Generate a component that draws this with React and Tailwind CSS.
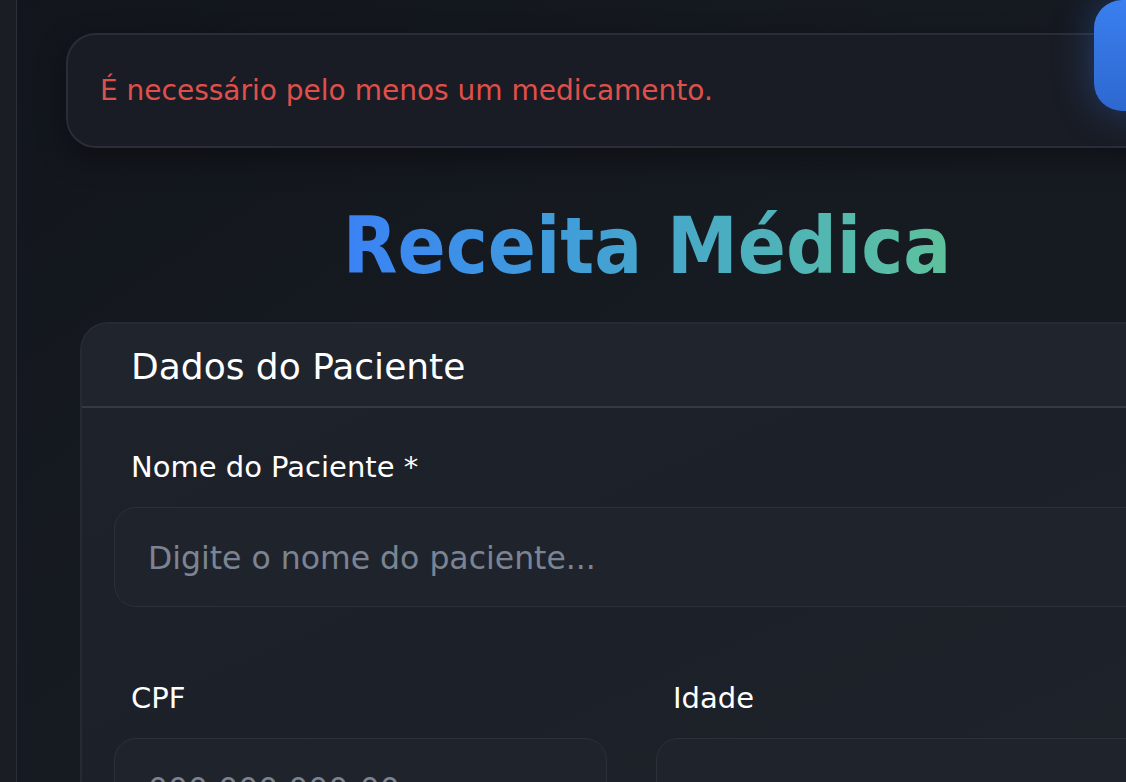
import React from 'react';

const font = { fontFamily: '"DejaVu Sans", "Liberation Sans", sans-serif' };
const titleFont = { fontFamily: '"DejaVu Sans Condensed", "DejaVu Sans", sans-serif' };

function Field({ label, placeholder, className = '' }) {
  return (
    <div className={className}>
      <label className="block pl-[17px] text-[29px] leading-[34px] text-white">{label}</label>
      <div className="mt-[23px] h-[100px] rounded-[22px] border border-[#2b313c] bg-[#1f242c] flex items-center px-[33px] pt-[4px]">
        <span className="text-[31.5px] text-[#7c8493] whitespace-nowrap">{placeholder}</span>
      </div>
    </div>
  );
}

export default function App() {
  return (
    <div
      className="w-[1126px] h-[782px] flex overflow-hidden bg-gradient-to-br from-[#12151c] via-[#161a21] to-[#171b21]"
      style={font}
    >
      <aside className="w-[17px] shrink-0 bg-[#1a1d24] border-r border-[#2a2f3a]" />

      <main className="relative flex-1 min-w-0">
        {/* botão azul no canto */}
        <div className="absolute top-0 left-[1077px] w-[120px] h-[111px] rounded-b-[28px] rounded-tl-[28px] bg-gradient-to-b from-[#3a7ff0] to-[#2d68cf] shadow-[0_0_40px_rgba(59,130,246,0.35)] z-10" />

        <div className="ml-[49px] mt-[33px] w-[1200px] h-[115px] rounded-[30px] border-2 border-[#282d38] bg-[#191c24] flex items-center pl-[32px] shadow-[0_10px_30px_rgba(0,0,0,0.35)]">
          <p className="text-[28px] text-[#e0504a] whitespace-nowrap">É necessário pelo menos um medicamento.</p>
        </div>

        <div className="ml-[63px] w-[1134px]">
          <h1 className="mt-[48px] text-center text-[79px] font-bold leading-[100px]" style={titleFont}>
            <span className="bg-gradient-to-r from-[#3b82f6] to-[#5ec29b] bg-clip-text text-transparent">Receita Médica</span>
          </h1>

          <section className="mt-[26px] rounded-[28px] border-2 border-[#252a33] bg-gradient-to-br from-[#1e232b] via-[#1c2028] to-[#1e232a]">
            <div className="h-[84px] border-b-2 border-[#343a44] flex items-center pl-[49px] pt-[4px] bg-[#1f242d] rounded-t-[28px]">
              <h2 className="text-[36px] text-white">Dados do Paciente</h2>
            </div>
            <div className="px-[32px] pt-[42px]">
              <Field label="Nome do Paciente *" placeholder="Digite o nome do paciente..." />
              <div className="mt-[74px] grid grid-cols-[493px_1fr] gap-[49px]">
                <Field label="CPF" placeholder="000.000.000-00" />
                <Field label="Idade" placeholder="" />
              </div>
            </div>
          </section>
        </div>
      </main>
    </div>
  );
}
